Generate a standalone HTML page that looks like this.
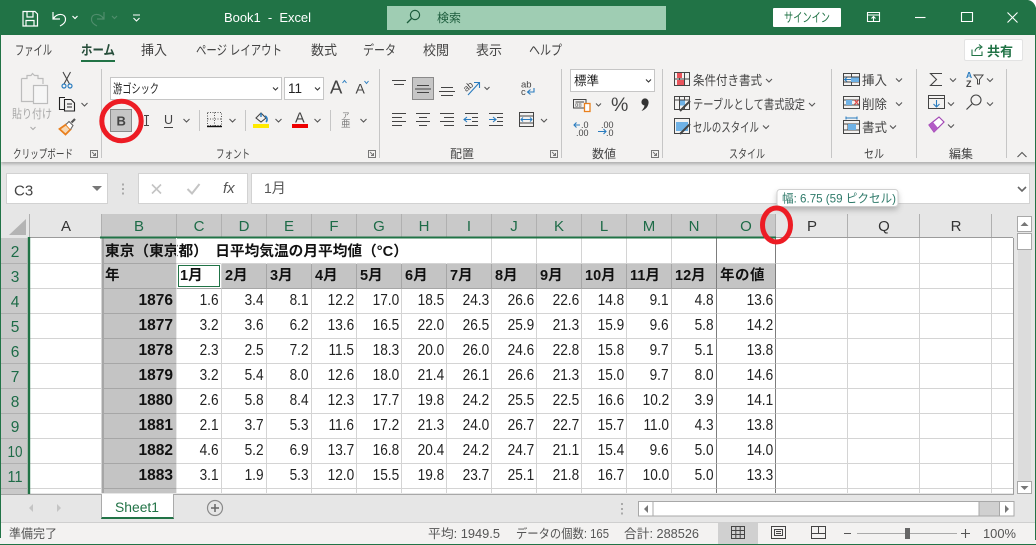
<!DOCTYPE html>
<html lang="ja"><head><meta charset="utf-8"><title>Book1 - Excel</title>
<style>
html,body{margin:0;padding:0;background:#fff}
#w{position:relative;width:1036px;height:545px;overflow:hidden;background:#e6e6e6;font-family:"Liberation Sans","Noto Sans CJK JP",sans-serif}
#w>div{position:absolute}
table{border-collapse:separate;border-spacing:0;table-layout:fixed;position:absolute;left:30px;top:238px;width:983px;background:#fff;font-size:14px;color:#222}
td{border-right:1px solid #d4d4d4;border-bottom:1px solid #d4d4d4;padding:0 2px 0 0;height:24px;text-align:right;white-space:nowrap;overflow:visible;box-sizing:content-box;line-height:16px;vertical-align:middle}
td i{font-style:normal;font-size:15.5px;line-height:16px;display:inline-block;vertical-align:top;transform:scaleX(.88);transform-origin:100% 50%}
tr.h td{height:25px}
tr.l td{height:4px;border-bottom:0;line-height:4px}
td.b{background:#c4c4c4;font-weight:bold;font-size:15.5px;color:#111;border-right-color:#e8e8e8;border-bottom-color:#a6a6a6;padding-right:3px;border-left:2px solid #a6a6a6}
td.m{background:#c4c4c4;font-weight:bold;font-size:14.5px;color:#111;text-align:left;padding:0 0 0 3px;border-right-color:#a6a6a6;border-bottom-color:#a6a6a6}
td.o,td.n{border-right-color:#7d7d7d}
td.x{border-right-color:transparent}
td.e{border-right:0}
svg{position:absolute;left:0;top:0}
svg text{font-family:"Liberation Sans","Noto Sans CJK JP",sans-serif}
</style></head><body><div id="w">
<div style="left:0;top:0;width:1036px;height:35px;background:#217346"></div>
<div style="left:1px;top:35px;width:1035px;height:127px;background:#f3f2f1;box-shadow:0 2px 3px rgba(0,0,0,.25)"></div>
<div style="left:387px;top:6px;width:279px;height:24px;background:#9fcdb3"></div>
<div style="left:773px;top:8px;width:68px;height:19px;background:#fff;border-radius:1px"></div>
<div style="left:964px;top:39px;width:59px;height:22px;background:#fff;border:1px solid #e3e3e3;box-sizing:border-box;border-radius:2px"></div>
<div style="left:81px;top:60px;width:34px;height:2px;background:#217346"></div>
<div style="left:110px;top:77px;width:172px;height:23px;background:#fff;border:1px solid #c6c6c6;box-sizing:border-box"></div>
<div style="left:284px;top:77px;width:40px;height:23px;background:#fff;border:1px solid #c6c6c6;box-sizing:border-box"></div>
<div style="left:570px;top:69px;width:85px;height:23px;background:#fff;border:1px solid #c6c6c6;box-sizing:border-box"></div>
<div style="left:412px;top:77px;width:22px;height:23px;background:#c6c6c6;border:1px solid #8a8a8a;box-sizing:border-box"></div>
<div style="left:110px;top:109px;width:22px;height:23px;background:#c6c6c6;border:1px solid #8a8a8a;box-sizing:border-box"></div>
<div style="left:6px;top:173px;width:102px;height:31px;background:#fff;border:1px solid #d2d2d2;box-sizing:border-box"></div>
<div style="left:138px;top:173px;width:110px;height:31px;background:#fff;border:1px solid #d2d2d2;box-sizing:border-box"></div>
<div style="left:251px;top:173px;width:779px;height:31px;background:#fff;border:1px solid #d2d2d2;box-sizing:border-box"></div>
<div style="left:1px;top:214px;width:1012px;height:24px;background:#e6e6e6"></div>
<div style="left:102px;top:214px;width:674px;height:24px;background:#c9c9c9"></div>
<div style="left:1px;top:238px;width:28px;height:256px;background:#c9c9c9"></div>

<table>
<colgroup><col style="width:72px"><col style="width:75px"><col style="width:45px"><col style="width:45px"><col style="width:45px"><col style="width:45px"><col style="width:45px"><col style="width:45px"><col style="width:45px"><col style="width:45px"><col style="width:45px"><col style="width:45px"><col style="width:45px"><col style="width:45px"><col style="width:59px"><col style="width:72px"><col style="width:72px"><col style="width:72px"><col style="width:22px"></colgroup>
<tr class="h"><td></td><td class="b" style="padding:0 0 0 1px"></td><td class="x"></td><td class="x"></td><td class="x"></td><td class="x"></td><td class="x"></td><td class="x"></td><td></td><td></td><td></td><td></td><td></td><td class="n"></td><td class="o"></td><td></td><td></td><td></td><td class="e"></td></tr>
<tr><td></td><td class="b" style="text-align:left;padding:0 0 0 1px;font-size:14.5px">年</td><td style="background:#fff;text-align:left;font-weight:bold;font-size:14.5px;color:#111;padding:0 0 0 3px;border-bottom-color:#a6a6a6">1月</td><td class="m">2月</td><td class="m">3月</td><td class="m">4月</td><td class="m">5月</td><td class="m">6月</td><td class="m">7月</td><td class="m">8月</td><td class="m">9月</td><td class="m">10月</td><td class="m">11月</td><td class="m" style="border-right-color:#7d7d7d">12月</td><td class="m" style="border-right-color:#7d7d7d;letter-spacing:.5px">年の値</td><td></td><td></td><td></td><td class="e"></td></tr>
<tr><td></td><td class="b">1876</td><td><i>1.6</i></td><td><i>3.4</i></td><td><i>8.1</i></td><td><i>12.2</i></td><td><i>17.0</i></td><td><i>18.5</i></td><td><i>24.3</i></td><td><i>26.6</i></td><td><i>22.6</i></td><td><i>14.8</i></td><td><i>9.1</i></td><td class="n"><i>4.8</i></td><td class="o"><i>13.6</i></td><td></td><td></td><td></td><td class="e"></td></tr>
<tr><td></td><td class="b">1877</td><td><i>3.2</i></td><td><i>3.6</i></td><td><i>6.2</i></td><td><i>13.6</i></td><td><i>16.5</i></td><td><i>22.0</i></td><td><i>26.5</i></td><td><i>25.9</i></td><td><i>21.3</i></td><td><i>15.9</i></td><td><i>9.6</i></td><td class="n"><i>5.8</i></td><td class="o"><i>14.2</i></td><td></td><td></td><td></td><td class="e"></td></tr>
<tr><td></td><td class="b">1878</td><td><i>2.3</i></td><td><i>2.5</i></td><td><i>7.2</i></td><td><i>11.5</i></td><td><i>18.3</i></td><td><i>20.0</i></td><td><i>26.0</i></td><td><i>24.6</i></td><td><i>22.8</i></td><td><i>15.8</i></td><td><i>9.7</i></td><td class="n"><i>5.1</i></td><td class="o"><i>13.8</i></td><td></td><td></td><td></td><td class="e"></td></tr>
<tr><td></td><td class="b">1879</td><td><i>3.2</i></td><td><i>5.4</i></td><td><i>8.0</i></td><td><i>12.6</i></td><td><i>18.0</i></td><td><i>21.4</i></td><td><i>26.1</i></td><td><i>26.6</i></td><td><i>21.3</i></td><td><i>15.0</i></td><td><i>9.7</i></td><td class="n"><i>8.0</i></td><td class="o"><i>14.6</i></td><td></td><td></td><td></td><td class="e"></td></tr>
<tr><td></td><td class="b">1880</td><td><i>2.6</i></td><td><i>5.8</i></td><td><i>8.4</i></td><td><i>12.3</i></td><td><i>17.7</i></td><td><i>19.8</i></td><td><i>24.2</i></td><td><i>25.5</i></td><td><i>22.5</i></td><td><i>16.6</i></td><td><i>10.2</i></td><td class="n"><i>3.9</i></td><td class="o"><i>14.1</i></td><td></td><td></td><td></td><td class="e"></td></tr>
<tr><td></td><td class="b">1881</td><td><i>2.1</i></td><td><i>3.7</i></td><td><i>5.3</i></td><td><i>11.6</i></td><td><i>17.2</i></td><td><i>21.3</i></td><td><i>24.0</i></td><td><i>26.7</i></td><td><i>22.7</i></td><td><i>15.7</i></td><td><i>11.0</i></td><td class="n"><i>4.3</i></td><td class="o"><i>13.8</i></td><td></td><td></td><td></td><td class="e"></td></tr>
<tr><td></td><td class="b">1882</td><td><i>4.6</i></td><td><i>5.2</i></td><td><i>6.9</i></td><td><i>13.7</i></td><td><i>16.8</i></td><td><i>20.4</i></td><td><i>24.2</i></td><td><i>24.7</i></td><td><i>21.1</i></td><td><i>15.4</i></td><td><i>9.6</i></td><td class="n"><i>5.0</i></td><td class="o"><i>14.0</i></td><td></td><td></td><td></td><td class="e"></td></tr>
<tr><td></td><td class="b">1883</td><td><i>3.1</i></td><td><i>1.9</i></td><td><i>5.3</i></td><td><i>12.0</i></td><td><i>15.5</i></td><td><i>19.8</i></td><td><i>23.7</i></td><td><i>25.1</i></td><td><i>21.8</i></td><td><i>16.7</i></td><td><i>10.0</i></td><td class="n"><i>5.0</i></td><td class="o"><i>13.3</i></td><td></td><td></td><td></td><td class="e"></td></tr>
<tr class="l"><td></td><td class="b"></td><td></td><td></td><td></td><td></td><td></td><td></td><td></td><td></td><td></td><td></td><td></td><td class="n"></td><td class="o"></td><td></td><td></td><td></td><td class="e"></td></tr>
</table>

<div style="left:0;top:494px;width:1036px;height:28px;background:#e6e6e6;border-top:1px solid #a8a8a8;box-sizing:border-box"></div>
<div style="left:101px;top:494px;width:73px;height:25px;background:#fff;border-bottom:2px solid #217346;box-sizing:border-box;border-left:1px solid #aaa;border-right:1px solid #aaa"></div>
<div style="left:0;top:522px;width:1036px;height:23px;background:#f3f2f1;border-top:1px solid #cfcfcf;box-sizing:border-box"></div>
<div style="left:718px;top:523px;width:40px;height:22px;background:#d0d0d0"></div>
<div style="left:1014px;top:214px;width:22px;height:281px;background:#e6e6e6"></div>

<svg width="1036" height="545" viewBox="0 0 1036 545" fill="none">
<defs><filter id="s" x="-10%" y="-30%" width="120%" height="200%"><feDropShadow dx="0" dy="3" stdDeviation="3" flood-color="#000" flood-opacity=".22"/></filter></defs>
<!-- window edge -->
<path d="M.5 0V538" stroke="#217346"/><path d="M0 544.5H1036" stroke="#217346"/><path d="M1035.5 30V540" stroke="#217346"/>
<path d="M1028 0H1036V8Q1034 1 1028 0Z" fill="#fff"/>

<!-- title bar -->
<g stroke="#fff" stroke-width="1.2">
<path d="M23 11.5H35L37.5 14V26H23Z M27 12V17H33V12 M26 26V20.5H34V26"/>
<path d="M53 12V19H60 M53.5 18.5C57 13 65 13 65.5 19C66 23 62 25 60 26"/>
<path d="M72.5 16l2.5 2.5 2.5-2.5"/>
</g>
<g stroke="#4f8d6c" stroke-width="1.2"><path d="M104 12V19H97 M103.5 18.5C100 13 92 13 91.5 19C91 23 95 25 97 26"/><path d="M112 16l2.5 2.5 2.5-2.5"/></g>
<path d="M133 15H140M133.5 18l3 3 3-3" stroke="#fff" stroke-width="1.1"/>
<text x="224" y="22" font-size="13" fill="#fff" xml:space="preserve" textLength="87">Book1  -  Excel</text>
<circle cx="415" cy="15" r="4.6" stroke="#1d5d3d" stroke-width="1.2"/><path d="M411.5 18.5L407 23" stroke="#1d5d3d" stroke-width="1.3"/>
<text x="437" y="22" font-size="12" fill="#1d5d3d">検索</text>
<text x="784" y="22" font-size="13" fill="#217346" textLength="46" lengthAdjust="spacingAndGlyphs">サインイン</text>
<g stroke="#fff" stroke-width="1.1"><path d="M867.5 12.5H879.5V21.5H867.5ZM867.5 15H879.5M873.5 21V17M871.5 18.5l2-2 2 2"/><path d="M915 17.5H925.5"/><path d="M961.5 12.5H972.5V21.5H961.5Z"/><path d="M1007.5 12.5L1017.5 22.5M1017.5 12.5L1007.5 22.5"/></g>

<!-- tabs -->
<g font-size="13.5" fill="#444">
<text x="15" y="55" textLength="37" lengthAdjust="spacingAndGlyphs">ファイル</text>
<text x="81" y="55" textLength="34" lengthAdjust="spacingAndGlyphs" font-weight="bold" fill="#264d3a">ホーム</text>
<text x="141" y="55" textLength="26" lengthAdjust="spacingAndGlyphs">挿入</text>
<text x="196" y="55" textLength="86" lengthAdjust="spacingAndGlyphs">ページ レイアウト</text>
<text x="311" y="55" textLength="26" lengthAdjust="spacingAndGlyphs">数式</text>
<text x="363" y="55" textLength="33" lengthAdjust="spacingAndGlyphs">データ</text>
<text x="423" y="55" textLength="26" lengthAdjust="spacingAndGlyphs">校閲</text>
<text x="476" y="55" textLength="26" lengthAdjust="spacingAndGlyphs">表示</text>
<text x="529" y="55" textLength="33" lengthAdjust="spacingAndGlyphs">ヘルプ</text>
</g>
<path d="M972 49.5V55.5H982V51.5M975 51.5C975.5 48 978 47 981 47M979 44.5l3 2.5-3 2.5" stroke="#217346" stroke-width="1.1"/>
<text x="987" y="56" font-size="13" font-weight="bold" fill="#217346" textLength="26">共有</text>

<!-- separators -->
<path d="M101.5 69V158M379.5 69V158M561.5 69V158M662.5 69V158M831.5 69V158M916.5 69V158M1006.5 69V158M199.5 110V131M245.5 110V131M330.5 110V131" stroke="#c6c6c6"/>

<!-- group labels -->
<g font-size="12" fill="#444">
<text x="13" y="158" textLength="60" lengthAdjust="spacingAndGlyphs">クリップボード</text>
<text x="216" y="158" textLength="34" lengthAdjust="spacingAndGlyphs">フォント</text>
<text x="450" y="158" textLength="24" lengthAdjust="spacingAndGlyphs">配置</text>
<text x="592" y="158" textLength="24" lengthAdjust="spacingAndGlyphs">数値</text>
<text x="729" y="158" textLength="36" lengthAdjust="spacingAndGlyphs">スタイル</text>
<text x="864" y="158" textLength="20" lengthAdjust="spacingAndGlyphs">セル</text>
<text x="949" y="158" textLength="24" lengthAdjust="spacingAndGlyphs">編集</text>
</g>
<path d="M90.5 150.5H97.5V157.5H90.5ZM92 152l3.5 3.5M95.5 153v2.5H93M368.5 150.5H375.5V157.5H368.5ZM370 152l3.5 3.5M373.5 153v2.5H371M550.5 150.5H557.5V157.5H550.5ZM552 152l3.5 3.5M555.5 153v2.5H553M651.5 150.5H658.5V157.5H651.5ZM653 152l3.5 3.5M656.5 153v2.5H654" stroke="#777"/>
<path d="M1017.5 157l4.5-4.5 4.5 4.5" stroke="#555" stroke-width="1.1"/>

<!-- clipboard -->
<path d="M21.5 78.5H27V75.5H31L32.5 73.5L34.5 75.5H38V78.5H43V84" stroke="#bcbcbc" stroke-width="1.2"/>
<path d="M21.5 78.5V101.5H33" stroke="#bcbcbc" stroke-width="1.2"/>
<rect x="33.5" y="85.5" width="14" height="18" fill="#f6f6f6" stroke="#bcbcbc" stroke-width="1.2"/>
<text x="12" y="118" font-size="12" fill="#a8a8a8" textLength="40" lengthAdjust="spacingAndGlyphs">貼り付け</text>
<path d="M30.5 127l2.5 2.5 2.5-2.5" stroke="#a8a8a8"/>
<path d="M63 72L69.5 84M70.5 72L64 84" stroke="#444" stroke-width="1.1"/><circle cx="64" cy="86" r="2" stroke="#2a7cbf" stroke-width="1.2"/><circle cx="70" cy="86" r="2" stroke="#2a7cbf" stroke-width="1.2"/>
<path d="M65 97.5H59.5V109.5H65" stroke="#222" stroke-width="1.1"/><path d="M64.5 99.5H71L74.5 103V111H64.5ZM67 104H72M67 107H72" stroke="#222" stroke-width="1.1"/>
<path d="M81.5 103l3 3 3-3" stroke="#555" stroke-width="1.1"/>
<path d="M59.5 129L66 124.5L70.5 129.5L65.5 134.5Z" fill="#f7d9b5" stroke="#e97f1c" stroke-width="1.8"/><path d="M66 124.5L69 121.5L73 125.5L70.5 129.5" fill="#fff" stroke="#666" stroke-width="1.1"/><path d="M71.5 122.5L75 119" stroke="#555" stroke-width="2.2"/>

<!-- font -->
<text x="113" y="93" font-size="12.5" fill="#222" textLength="46" lengthAdjust="spacingAndGlyphs">游ゴシック</text>
<text x="288" y="93" font-size="13.5" fill="#222">11</text>
<path d="M273 87.5l2.5 2.5 2.5-2.5M315 87.5l2.5 2.5 2.5-2.5M646 79.5l2.5 2.5 2.5-2.5" stroke="#333" stroke-width="1.1"/>
<text x="330" y="93.5" font-size="18.5" fill="#444">A</text><text x="355.5" y="93.5" font-size="14" fill="#444">A</text>
<path d="M342.5 83l2-2.5 2 2.5" stroke="#2a7cbf"/><path d="M364.5 81l2 2.5 2-2.5" stroke="#2a7cbf"/>
<text x="116.5" y="125.5" font-size="13" font-weight="bold" fill="#444">B</text>
<path d="M144 115.5H149M144 125.5H149M146.5 115.5V125.5" stroke="#444" stroke-width="1.1"/>
<text x="164" y="124" font-size="12.5" fill="#444">U</text><path d="M164 127.5H173" stroke="#444"/>
<path d="M183.5 119l3 3 3-3M229.5 119l3 3 3-3M275.5 119l3 3 3-3M314.5 119l3 3 3-3M360.5 119l3 3 3-3" stroke="#555" stroke-width="1.1"/>
<path d="M207.5 112.5H221.5V125.5H207.5ZM214.5 112.5V125.5M207.5 119H221.5" stroke="#555" stroke-dasharray="1 1.5"/><path d="M207 126.5H222" stroke="#111" stroke-width="1.4"/>
<path d="M256 118L261 113L266 118L261 122Z" stroke="#444" stroke-width="1.1"/><path d="M261 113V117" stroke="#2a7cbf" stroke-width="1.4"/><path d="M265 116C267 117 268 120 266 122" stroke="#2a7cbf" stroke-width="1.6"/>
<rect x="253" y="124" width="16" height="4" fill="#ffea00"/>
<text x="295" y="122.5" font-size="14.5" fill="#444">A</text><rect x="292" y="124" width="16" height="4" fill="#ee0000"/>
<text x="342" y="118" font-size="7.5" fill="#777">ア</text><text x="341" y="127" font-size="9.5" fill="#777">亜</text>

<!-- align -->
<path d="M392 80.5H406M394 84.5H404M417 85.5H429M415 89H431M417 92.5H429M441 87.5H453M439 91.5H455M441 95.5H453" stroke="#444" stroke-width="1"/>
<text x="464" y="90" font-size="9" fill="#444" transform="rotate(-40 468 88)">ab</text><path d="M468 95L479 83M474 82.5H479.5V88" stroke="#2a7cbf" stroke-width="1.1"/>
<path d="M484.5 87l2.5 2.5 2.5-2.5M541 119l3 3 3-3" stroke="#555" stroke-width="1.1"/>
<path d="M392 113.5H406M392 117.5H402M392 121.5H406M392 125.5H402M416 113.5H430M419 117.5H427M416 121.5H430M419 125.5H427M440 113.5H454M444 117.5H454M440 121.5H454M444 125.5H454M465 113.5H478M465 125.5H478M472 117.5H478M472 121.5H478M489 113.5H503M489 125.5H503M497 117.5H503M497 121.5H503" stroke="#444"/>
<path d="M471 119.5H464M467 117l-3 2.5 3 2.5M489 119.5H496M493 117l3 2.5-3 2.5" stroke="#2a7cbf" stroke-width="1.1"/>
<text x="521" y="87.5" font-size="9.5" fill="#444">ab</text><text x="521" y="95" font-size="9.5" fill="#444">c</text><path d="M534 88V92H528M530.5 89.5L527.5 92l3 2.5" stroke="#2a7cbf" stroke-width="1.1"/>
<path d="M519.5 112.5H533.5V126.5H519.5ZM519.5 116H533.5M519.5 123H533.5" stroke="#444"/><path d="M521 119.5H532M523 117.5l-2 2 2 2M530 117.5l2 2-2 2" stroke="#2a7cbf"/>

<!-- number -->
<text x="574" y="85" font-size="12.5" fill="#222">標準</text>
<path d="M573.5 99.5H586V108H573.5ZM575.5 102H584" stroke="#444"/><text x="575" y="107" font-size="6" fill="#444">¤¤</text>
<rect x="584.5" y="103.5" width="5.5" height="8" fill="#fff" stroke="#e97f1c" stroke-width="1.3"/>
<path d="M596 103.5l2.5 2.5 2.5-2.5" stroke="#555" stroke-width="1.1"/>
<text x="611" y="111" font-size="19.5" fill="#444">%</text>
<circle cx="645" cy="102" r="3.6" fill="#333"/><path d="M648.6 102C648.6 106 646 109.5 641.5 111C643.5 108.5 644.5 107 644.5 105Z" fill="#333"/>
<text x="581" y="128" font-size="9" fill="#444">.0</text><text x="576" y="136" font-size="9" fill="#444">.00</text>
<text x="601" y="128" font-size="9" fill="#444">.00</text><text x="606" y="136" font-size="9" fill="#444">.0</text>
<path d="M580 125H574M576.5 122.5L574 125l2.5 2.5M598 131.5H606M603.5 129l2.5 2.5-2.5 2.5" stroke="#2a7cbf" stroke-width="1.1"/>

<!-- styles -->
<path d="M674.5 72.5H689.5V85.5H674.5ZM674.5 79H689.5M679.5 72.5V85.5M684.5 72.5V85.5" stroke="#444"/><rect x="677" y="73" width="5" height="5" fill="#e9545c"/><rect x="677" y="80" width="7" height="5" fill="#e9545c"/>
<path d="M674.5 96.5H689.5V109.5H674.5ZM674.5 100H689.5M679.5 96.5V109.5M684.5 96.5V109.5" stroke="#444"/><rect x="680" y="100.5" width="5" height="5" fill="#6fb2e6"/><path d="M680 111L690 101" stroke="#444" stroke-width="2"/>
<path d="M674.5 118.5H689.5V133.5H674.5Z" stroke="#444"/><rect x="676" y="122" width="12" height="9" fill="#6fb2e6"/><path d="M680 134L690 124" stroke="#444" stroke-width="2"/>
<g font-size="13" fill="#444">
<text x="693" y="85" textLength="69" lengthAdjust="spacingAndGlyphs">条件付き書式</text>
<text x="693" y="109" textLength="112" lengthAdjust="spacingAndGlyphs">テーブルとして書式設定</text>
<text x="693" y="132" textLength="66" lengthAdjust="spacingAndGlyphs">セルのスタイル</text>
<text x="862" y="85" textLength="25" lengthAdjust="spacingAndGlyphs">挿入</text>
<text x="862" y="109" textLength="25" lengthAdjust="spacingAndGlyphs">削除</text>
<text x="862" y="132" textLength="25" lengthAdjust="spacingAndGlyphs">書式</text>
</g>
<path d="M766 79l3 3 3-3M809 103l3 3 3-3M763 125.5l3 3 3-3M896 78.5l3 3 3-3M896 102.5l3 3 3-3M890 125.5l3 3 3-3M950 78.5l3 3 3-3M987 78.5l3 3 3-3M948 102.5l3 3 3-3M987 102.5l3 3 3-3M948 124.5l3 3 3-3" stroke="#555" stroke-width="1.1"/>

<!-- cells -->
<path d="M843.5 73.5H859.5V85.5H843.5ZM851.5 73.5V85.5M843.5 77H859.5M843.5 82H859.5" stroke="#444"/><rect x="851" y="77.5" width="8" height="4.5" fill="#6fb2e6"/><path d="M851 79.5H844.5M847 77.5l-2.5 2 2.5 2" stroke="#2a7cbf" stroke-width="1.1"/>
<path d="M843.5 96.5H859.5V108.5H843.5ZM843.5 100H859.5M843.5 105H859.5" stroke="#444"/><rect x="846" y="100" width="6" height="5" fill="#6fb2e6"/><path d="M854.5 100l4 4.5M858.5 100l-4 4.5" stroke="#e34b4b" stroke-width="1.3"/>
<path d="M843.5 120.5H859.5V133.5H843.5ZM843.5 124H859.5M843.5 130H859.5M848 124V130" stroke="#444"/><rect x="848" y="124" width="8" height="6" fill="#6fb2e6"/><path d="M846 118H857M846 116.5V119.5M857 116.5V119.5" stroke="#2a7cbf"/>

<!-- edit -->
<path d="M942 73.5H930.5L936.5 79.5L930.5 85.5H942" stroke="#444" stroke-width="1.1"/>
<text x="966" y="78" font-size="8.5" font-weight="bold" fill="#2a7cbf">A</text><text x="966" y="87" font-size="9" font-weight="bold" fill="#444">Z</text>
<path d="M974 75H983L979.5 79.5V84H977.5V79.5Z" stroke="#444"/>
<path d="M928.5 95.5H944.5V108.5H928.5ZM928.5 98.5H944.5" stroke="#444"/><path d="M936.5 100V106.5M933.5 104l3 3 3-3" stroke="#2a7cbf" stroke-width="1.1"/>
<circle cx="976" cy="100" r="5" stroke="#444" stroke-width="1.1"/><path d="M972 104L966.5 109.5" stroke="#444" stroke-width="1.2"/>
<path d="M929 125L939 117L944 122L934 132Z" fill="#fff" stroke="#a349b5" stroke-width="1.2"/><path d="M929 125L934 132L938 128L933 122Z" fill="#b35cc6"/>

<!-- formula bar -->
<text x="14" y="195.5" font-size="15" fill="#444">C3</text>
<path d="M92 186H102L97 191Z" fill="#777"/>
<path d="M122 183.5h2v2h-2zM122 188h2v2h-2zM122 192.5h2v2h-2z" fill="#aaa"/>
<path d="M152 184.5L161 193.5M161 184.5L152 193.5" stroke="#c4c4c4" stroke-width="1.6"/>
<path d="M187.5 189L192 193.5L199.5 184" stroke="#c4c4c4" stroke-width="2"/>
<text x="223" y="193" font-size="15" font-style="italic" fill="#555" font-family="Liberation Serif">fx</text>
<text x="264" y="193" font-size="14" fill="#555">1月</text>
<path d="M1018 187l4 4 4-4" stroke="#666" stroke-width="1.6"/>

<!-- column headers -->
<path d="M29.5 214V238M101.5 214V238M176.5 214V238M221.5 214V238M266.5 214V238M311.5 214V238M356.5 214V238M401.5 214V238M446.5 214V238M491.5 214V238M536.5 214V238M581.5 214V238M626.5 214V238M671.5 214V238M716.5 214V238M775.5 214V238M847.5 214V238M919.5 214V238M991.5 214V238" stroke="#b0b0b0"/>
<path d="M9 235H26V219Z" fill="#b4b4b4"/>
<g font-size="15" text-anchor="middle" fill="#1d6b47">
<text x="139" y="231">B</text><text x="199" y="231">C</text><text x="244" y="231">D</text><text x="289" y="231">E</text><text x="334" y="231">F</text><text x="379" y="231">G</text><text x="424" y="231">H</text><text x="469" y="231">I</text><text x="514" y="231">J</text><text x="559" y="231">K</text><text x="604" y="231">L</text><text x="649" y="231">M</text><text x="694" y="231">N</text><text x="746" y="231">O</text>
</g>
<g font-size="15" text-anchor="middle" fill="#333"><text x="66" y="231">A</text><text x="812" y="231">P</text><text x="884" y="231">Q</text><text x="956" y="231">R</text></g>
<path d="M30 237.5H1013" stroke="#9b9b9b"/>
<path d="M100 237.5H776" stroke="#217346" stroke-width="2"/>
<path d="M29 237V494" stroke="#217346" stroke-width="2.4"/>
<path d="M1 263.5H28M1 288.5H28M1 313.5H28M1 338.5H28M1 363.5H28M1 388.5H28M1 413.5H28M1 438.5H28M1 463.5H28M1 488.5H28" stroke="#b0b0b0"/>
<g font-size="15.5" text-anchor="middle" fill="#1d6b47"><text x="15" y="257">2</text><text x="15" y="282">3</text><text x="15" y="307">4</text><text x="15" y="332">5</text><text x="15" y="357">6</text><text x="15" y="382">7</text><text x="15" y="407">8</text><text x="15" y="432">9</text><text x="15" y="457" textLength="15" lengthAdjust="spacingAndGlyphs">10</text><text x="15" y="482" textLength="15" lengthAdjust="spacingAndGlyphs">11</text></g>
<path d="M1013.5 238V494" stroke="#9b9b9b"/>

<!-- B2 title + active cell -->
<text x="105" y="256" font-size="14.5" font-weight="bold" fill="#111" textLength="303" lengthAdjust="spacingAndGlyphs" xml:space="preserve">東京（東京都）　日平均気温の月平均値（°C）</text>
<path d="M176.5 238V263" stroke="#f0f0f0"/>
<rect x="178.5" y="265.5" width="41" height="21" stroke="#217346" stroke-width="1"/>

<!-- tooltip -->
<rect x="777" y="189.5" width="121" height="17" rx="3" fill="#fff" stroke="#d0d0d0" filter="url(#s)"/>
<text x="782" y="202.5" font-size="12" fill="#2f7a6a" textLength="114" lengthAdjust="spacingAndGlyphs">幅: 6.75 (59 ピクセル)</text>

<!-- red marks -->
<circle cx="121.5" cy="121" r="19.7" stroke="#ed1c24" stroke-width="5"/>
<ellipse cx="776.5" cy="225" rx="14" ry="17" stroke="#ed1c24" stroke-width="5"/>

<!-- vertical scrollbar -->
<rect x="1017.5" y="216.5" width="14" height="15" fill="#fff" stroke="#a8a8a8"/><path d="M1020.5 226L1024.5 222L1028.5 226Z" fill="#777"/>
<rect x="1018" y="250" width="13" height="231" fill="#dcdcdc"/>
<rect x="1017.5" y="233.5" width="14" height="16" fill="#fff" stroke="#a8a8a8"/>
<rect x="1017.5" y="481.5" width="14" height="12" fill="#fff" stroke="#a8a8a8"/><path d="M1020.5 486L1024.5 490L1028.5 486Z" fill="#777"/>

<!-- sheet tabs -->
<path d="M33 504L29 508L33 512Z M57 504L61 508L57 512Z" fill="#c4c4c4"/>
<text x="115" y="512" font-size="13.5" fill="#217346" textLength="44" lengthAdjust="spacingAndGlyphs">Sheet1</text>
<circle cx="215" cy="508" r="7.5" stroke="#8a8a8a" stroke-width="1.2"/><path d="M211 508H219M215 504V512" stroke="#666" stroke-width="1.5"/>
<path d="M621 503h2v2h-2zM621 508h2v2h-2zM621 512.5h2v2h-2z" fill="#aaa"/>

<!-- horizontal scrollbar -->
<rect x="638.5" y="501.5" width="375" height="14.5" fill="#d0d0d0" stroke="#a8a8a8"/>
<rect x="653" y="501.5" width="326" height="14.5" fill="#fff" stroke="#a8a8a8"/>
<rect x="638.5" y="501.5" width="14.5" height="14.5" fill="#fff" stroke="#a8a8a8"/><path d="M648 505L644 509L648 513Z" fill="#777"/>
<rect x="999.5" y="501.5" width="14.5" height="14.5" fill="#fff" stroke="#a8a8a8"/><path d="M1005 505L1009 509L1005 513Z" fill="#777"/>

<!-- status bar -->
<g font-size="12.5" fill="#555">
<text x="9" y="538" textLength="48" lengthAdjust="spacingAndGlyphs">準備完了</text>
<text x="428" y="538" textLength="72" lengthAdjust="spacingAndGlyphs">平均: 1949.5</text>
<text x="516" y="538" textLength="93" lengthAdjust="spacingAndGlyphs">データの個数: 165</text>
<text x="624" y="538" textLength="75" lengthAdjust="spacingAndGlyphs">合計: 288526</text>
<text x="983" y="538" textLength="33" lengthAdjust="spacingAndGlyphs">100%</text>
</g>
<path d="M731.5 526.5H744.5V538.5H731.5ZM731.5 530.5H744.5M731.5 534.5H744.5M735.8 526.5V538.5M740.2 526.5V538.5" stroke="#444"/>
<path d="M771.5 526.5H785.5V538.5H771.5ZM774.5 529.5H782.5V535.5H774.5ZM776 531.5H781M776 533.5H781" stroke="#444"/>
<path d="M811.5 526.5H825.5V538.5H811.5ZM818.5 526.5V533.5M811.5 533.5H825.5" stroke="#444"/>
<path d="M844 533.5H851M961 533.5H970M965.5 529V538" stroke="#555" stroke-width="1.1"/>
<path d="M857 533.5H957" stroke="#aaa"/><rect x="905" y="528" width="5" height="11" fill="#666"/>
</svg>
</div></body></html>
